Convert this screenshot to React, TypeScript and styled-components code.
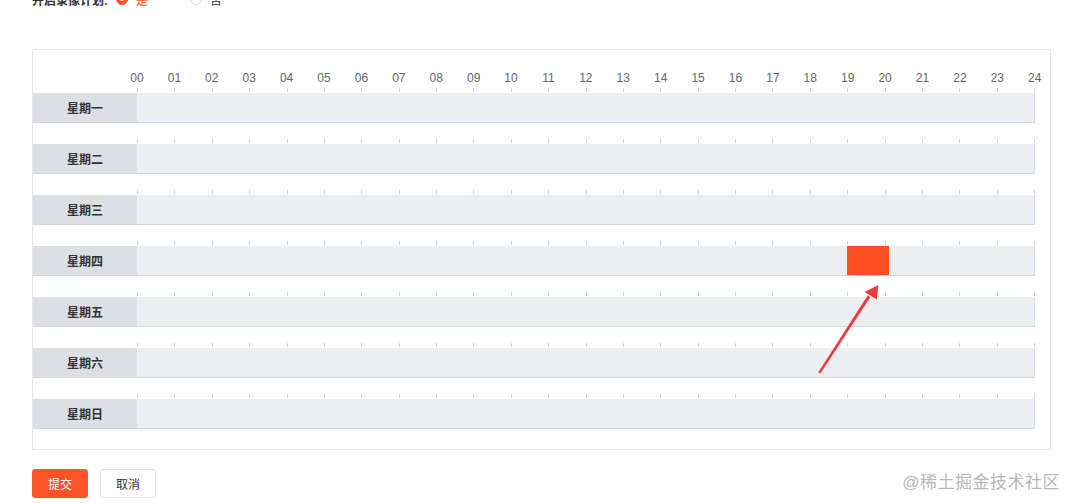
import { createGlobalStyle, styled } from 'styled-components'

const GlobalStyle = createGlobalStyle`
    html, body {
        margin: 0;
        padding: 0;
        background: #ffffff;
        font-family: "Liberation Sans", "Noto Sans CJK SC", sans-serif;
    }
`

const HOURS = 24
const BAR_WIDTH = 898
const LABEL_WIDTH = 104
const STEP = BAR_WIDTH / HOURS

const days = ['星期一', '星期二', '星期三', '星期四', '星期五', '星期六', '星期日']

// selected time ranges, in px on the bar
const selected: Record<number, { left: number; width: number }> = {
    3: { left: 710, width: 42 },
}

const Page = styled.div`
    position: relative;
    width: 1078px;
    height: 503px;
    overflow: hidden;
    padding: 0 0 0 32px;
    box-sizing: border-box;
`

const FormRow = styled.div`
    display: flex;
    align-items: center;
    height: 20px;
    margin-top: -11px;
    font-size: 12px;
`

const FormLabel = styled.div`
    color: #333;
    font-weight: bold;
    margin-right: 8px;
`

const RadioItem = styled.label<{ $checked?: boolean }>`
    display: flex;
    align-items: center;
    gap: 8px;
    margin-right: 42px;
    color: ${p => (p.$checked ? '#ff5227' : '#333')};
`

const RadioDot = styled.span<{ $checked?: boolean }>`
    width: 12px;
    height: 12px;
    border-radius: 50%;
    box-sizing: border-box;
    border: 1px solid ${p => (p.$checked ? '#ff5227' : '#d9d9d9')};
    background: ${p => (p.$checked ? '#ff5227' : '#fff')};
    display: flex;
    align-items: center;
    justify-content: center;

    &::after {
        content: '';
        width: 4px;
        height: 4px;
        border-radius: 50%;
        background: #fff;
        display: ${p => (p.$checked ? 'block' : 'none')};
    }
`

const Panel = styled.div`
    width: 1019px;
    box-sizing: border-box;
    margin-top: 40px;
    border: 1px solid #e4e6ea;
    padding: 0 15px 20px 0;
`

const HourHeader = styled.div`
    display: flex;
    align-items: flex-end;
    height: 38px;
    box-sizing: border-box;
    padding-left: ${LABEL_WIDTH - STEP / 2}px;
    padding-bottom: 4px;
`

const HourLabel = styled.div`
    flex: 0 0 ${STEP}px;
    text-align: center;
    font-size: 12px;
    line-height: 12px;
    color: #666;
`

const DayBlock = styled.div`
    margin-bottom: 16px;

    &:last-child {
        margin-bottom: 0;
    }
`

const TickStrip = styled.div`
    display: flex;
    height: 5px;
    width: ${BAR_WIDTH}px;
    margin-left: ${LABEL_WIDTH}px;
`

const Tick = styled.div`
    flex: 1;
    height: 4px;
    border-left: 1px solid #d0d3d8;

    &:last-child {
        border-right: 1px solid #d0d3d8;
    }
`

const DayRow = styled.div`
    display: flex;
    height: 30px;
`

const DayCell = styled.div`
    flex: 0 0 ${LABEL_WIDTH}px;
    display: flex;
    align-items: center;
    justify-content: center;
    background: #dcdfe4;
    border-bottom: 1px solid #d3d6db;
    font-size: 12px;
    font-weight: bold;
    color: #333;
`

const Bar = styled.div`
    position: relative;
    flex: 1;
    background: #edeef1;
    border-bottom: 1px solid #d6d9de;
    border-right: 1px solid #dcdfe3;
`

const Slot = styled.div<{ $left: number; $width: number }>`
    position: absolute;
    top: 0;
    bottom: 0;
    left: ${p => p.$left}px;
    width: ${p => p.$width}px;
    background: #ff5024;
`

const Actions = styled.div`
    display: flex;
    gap: 12px;
    margin-top: 19px;
`

const Button = styled.button<{ $primary?: boolean }>`
    width: 56px;
    height: 29px;
    border-radius: 3px;
    font-size: 12px;
    font-family: inherit;
    cursor: pointer;
    border: 1px solid ${p => (p.$primary ? '#ff5227' : '#e1e3e8')};
    background: ${p => (p.$primary ? '#ff5227' : '#fff')};
    color: ${p => (p.$primary ? '#fff' : '#333')};
`

const Annotation = styled.svg`
    position: absolute;
    left: 0;
    top: 0;
    pointer-events: none;
`

const Watermark = styled.div`
    position: absolute;
    right: 18px;
    top: 468px;
    font-size: 17px;
    letter-spacing: 0.5px;
    color: rgba(140, 140, 140, 0.65);
`

const App = () => {
    return (
        <>
            <GlobalStyle />
            <Page>
                <FormRow>
                    <FormLabel>开启录像计划:</FormLabel>
                    <RadioItem $checked>
                        <RadioDot $checked />
                        是
                    </RadioItem>
                    <RadioItem>
                        <RadioDot />
                        否
                    </RadioItem>
                </FormRow>

                <Panel>
                    <HourHeader>
                        {Array.from({ length: HOURS + 1 }, (_, i) => (
                            <HourLabel key={i}>{String(i).padStart(2, '0')}</HourLabel>
                        ))}
                    </HourHeader>
                    {days.map((day, idx) => (
                        <DayBlock key={day}>
                            <TickStrip>
                                {Array.from({ length: HOURS }, (_, i) => (
                                    <Tick key={i} />
                                ))}
                            </TickStrip>
                            <DayRow>
                                <DayCell>{day}</DayCell>
                                <Bar>
                                    {selected[idx] && (
                                        <Slot $left={selected[idx].left} $width={selected[idx].width} />
                                    )}
                                </Bar>
                            </DayRow>
                        </DayBlock>
                    ))}
                </Panel>

                <Actions>
                    <Button $primary>提交</Button>
                    <Button>取消</Button>
                </Actions>

                <Annotation width="1078" height="503" viewBox="0 0 1078 503">
                    <polygon points="818.2,372.4 820.4,373.4 870.2,297.2 867.6,295.4" fill="#f2393b" />
                    <polygon points="878.4,285 864.6,292 876.8,299.6" fill="#f2393b" />
                </Annotation>

                <Watermark>@稀土掘金技术社区</Watermark>
            </Page>
        </>
    )
}

export default App
